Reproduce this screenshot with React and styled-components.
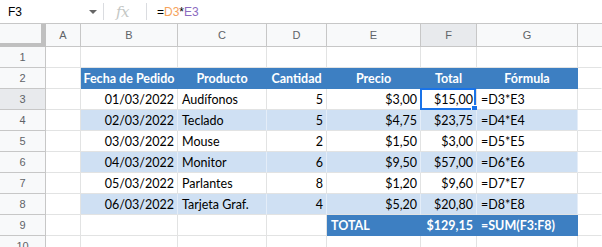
import React from "react";
import styled, { createGlobalStyle } from "styled-components";

const GlobalStyle = createGlobalStyle`
  html, body { margin: 0; padding: 0; background: #fff; overflow: hidden; }
  * { box-sizing: border-box; }
`;

const Page = styled.div`
  width: 602px;
  height: 247px;
  overflow: hidden;
  background: #fff;
  font-family: "Liberation Sans", Arial, sans-serif;
`;

const FormulaBar = styled.div`
  height: 24px;
  display: flex;
  align-items: center;
  border-bottom: 1px solid #c7c7c7;
`;

const NameBox = styled.div`
  width: 86px;
  padding-left: 8px;
  font-size: 12px;
  color: #000;
`;

const Caret = styled.div`
  width: 0;
  height: 0;
  border-left: 4px solid transparent;
  border-right: 4px solid transparent;
  border-top: 4px solid #666;
  margin-left: 3px;
`;

const Divider = styled.div`
  width: 1px;
  height: 17px;
  background: #dadce0;
  margin-left: ${(p) => p.$ml}px;
`;

const Fx = styled.div`
  margin-left: 12px;
  width: 30px;
  font-family: "DejaVu Serif", "Liberation Serif", serif;
  font-style: italic;
  font-size: 15px;
  color: #c4c7c5;
  letter-spacing: -0.5px;
`;

const FormulaText = styled.div`
  margin-left: 10px;
  font-size: 12px;
  color: #000;
`;

const Ref = styled.span`
  color: ${(p) => p.$c};
`;

const Grid = styled.div`
  display: grid;
  grid-template-columns: 46px 35px 97px 89px 60px 94px 56px 101px 1fr;
  grid-template-rows: 23px repeat(10, 21px);
`;

const Corner = styled.div`
  background: #f8f9fa;
  border-right: 5px solid #c0c0c0;
  border-bottom: 4px solid #c0c0c0;
`;

const ColHeader = styled.div`
  background: ${(p) => (p.$active ? "#e8eaed" : "#f8f9fa")};
  border-right: ${(p) => (p.$last ? "none" : "1px solid #c7c7c7")};
  border-bottom: 1px solid #c7c7c7;
  display: flex;
  align-items: center;
  justify-content: center;
  font-size: 11px;
  color: #5f6368;
`;

const RowHeader = styled.div`
  background: ${(p) => (p.$active ? "#e8eaed" : "#f8f9fa")};
  border-right: 1px solid #c7c7c7;
  border-bottom: 1px solid #c7c7c7;
  display: flex;
  align-items: center;
  justify-content: center;
  font-size: 11px;
  color: #5f6368;
`;

const fills = {
  head: "#3d7fc2",
  band: "#cfe0f3",
  none: "#ffffff",
};

const lineFor = {
  head: "#3d7fc2",
  band: "#e4edf8",
  none: "#e2e3e3",
};

const Cell = styled.div`
  position: relative;
  background: ${(p) => fills[p.$fill || "none"]};
  border-right: 1px solid ${(p) => (p.$last ? "transparent" : lineFor[p.$fill || "none"])};
  border-bottom: 1px solid ${(p) => (p.$fill === "head" ? "#3d7fc2" : "#e2e3e3")};
  display: flex;
  align-items: center;
  justify-content: ${(p) =>
    p.$align === "right" ? "flex-end" : p.$align === "center" ? "center" : "flex-start"};
  padding: 0 4px 0 4px;
  padding-right: ${(p) => (p.$align === "right" ? 3 : 4)}px;
  font-family: Lato, "Open Sans", sans-serif;
  font-size: 12.5px;
  font-weight: ${(p) => (p.$bold ? 700 : 400)};
  color: ${(p) => (p.$fill === "head" ? "#ffffff" : "#000000")};
  white-space: nowrap;
  overflow: visible;
`;

const Selection = styled.div`
  position: absolute;
  top: -1px;
  left: -1px;
  right: 0;
  bottom: -1px;
  border: 2px solid #1a73e8;
  pointer-events: none;
`;

const Handle = styled.div`
  position: absolute;
  right: -4px;
  bottom: -4px;
  width: 7px;
  height: 7px;
  background: #1a73e8;
  border: 1px solid #fff;
`;

const cols = ["A", "B", "C", "D", "E", "F", "G", ""];

const data = [
  ["01/03/2022", "Audífonos", "5", "$3,00", "$15,00", "=D3*E3"],
  ["02/03/2022", "Teclado", "5", "$4,75", "$23,75", "=D4*E4"],
  ["03/03/2022", "Mouse", "2", "$1,50", "$3,00", "=D5*E5"],
  ["04/03/2022", "Monitor", "6", "$9,50", "$57,00", "=D6*E6"],
  ["05/03/2022", "Parlantes", "8", "$1,20", "$9,60", "=D7*E7"],
  ["06/03/2022", "Tarjeta Graf.", "4", "$5,20", "$20,80", "=D8*E8"],
];

const headers = ["Fecha de Pedido", "Producto", "Cantidad", "Precio", "Total", "Fórmula"];
const aligns = ["right", "left", "right", "right", "right", "left"];

export default function App() {
  const rows = [];
  rows.push(
    <React.Fragment key="r1">
      <RowHeader>1</RowHeader>
      {cols.map((c, i) => (
        <Cell key={i} $last={i === 7} />
      ))}
    </React.Fragment>
  );
  rows.push(
    <React.Fragment key="r2">
      <RowHeader>2</RowHeader>
      <Cell />
      {headers.map((h, i) => (
        <Cell key={i} $fill="head" $bold $align="center">
          {h}
        </Cell>
      ))}
      <Cell $last />
    </React.Fragment>
  );
  data.forEach((r, ri) => {
    const n = ri + 3;
    const fill = ri % 2 === 1 ? "band" : "none";
    rows.push(
      <React.Fragment key={"d" + n}>
        <RowHeader $active={n === 3}>{n}</RowHeader>
        <Cell />
        {r.map((v, ci) => (
          <Cell key={ci} $fill={fill} $align={aligns[ci]}>
            {v}
            {n === 3 && ci === 4 && (
              <Selection>
                <Handle />
              </Selection>
            )}
          </Cell>
        ))}
        <Cell $last />
      </React.Fragment>
    );
  });
  rows.push(
    <React.Fragment key="r9">
      <RowHeader>9</RowHeader>
      <Cell />
      <Cell />
      <Cell />
      <Cell />
      <Cell $fill="head" $bold>TOTAL</Cell>
      <Cell $fill="head" $bold $align="right">$129,15</Cell>
      <Cell $fill="head" $bold>=SUM(F3:F8)</Cell>
      <Cell $last />
    </React.Fragment>
  );
  rows.push(
    <React.Fragment key="r10">
      <RowHeader>10</RowHeader>
      {cols.map((c, i) => (
        <Cell key={i} $last={i === 7} />
      ))}
    </React.Fragment>
  );

  return (
    <Page>
      <GlobalStyle />
      <FormulaBar>
        <NameBox>F3</NameBox>
        <Caret />
        <Divider $ml={6} />
        <Fx>fx</Fx>
        <Divider $ml={0} />
        <FormulaText>
          =<Ref $c="#f6a35b">D3</Ref>*<Ref $c="#8b6bbf">E3</Ref>
        </FormulaText>
      </FormulaBar>
      <Grid>
        <Corner />
        {cols.map((c, i) => (
          <ColHeader key={i} $active={c === "F"} $last={i === 7}>
            {c}
          </ColHeader>
        ))}
        {rows}
      </Grid>
    </Page>
  );
}
